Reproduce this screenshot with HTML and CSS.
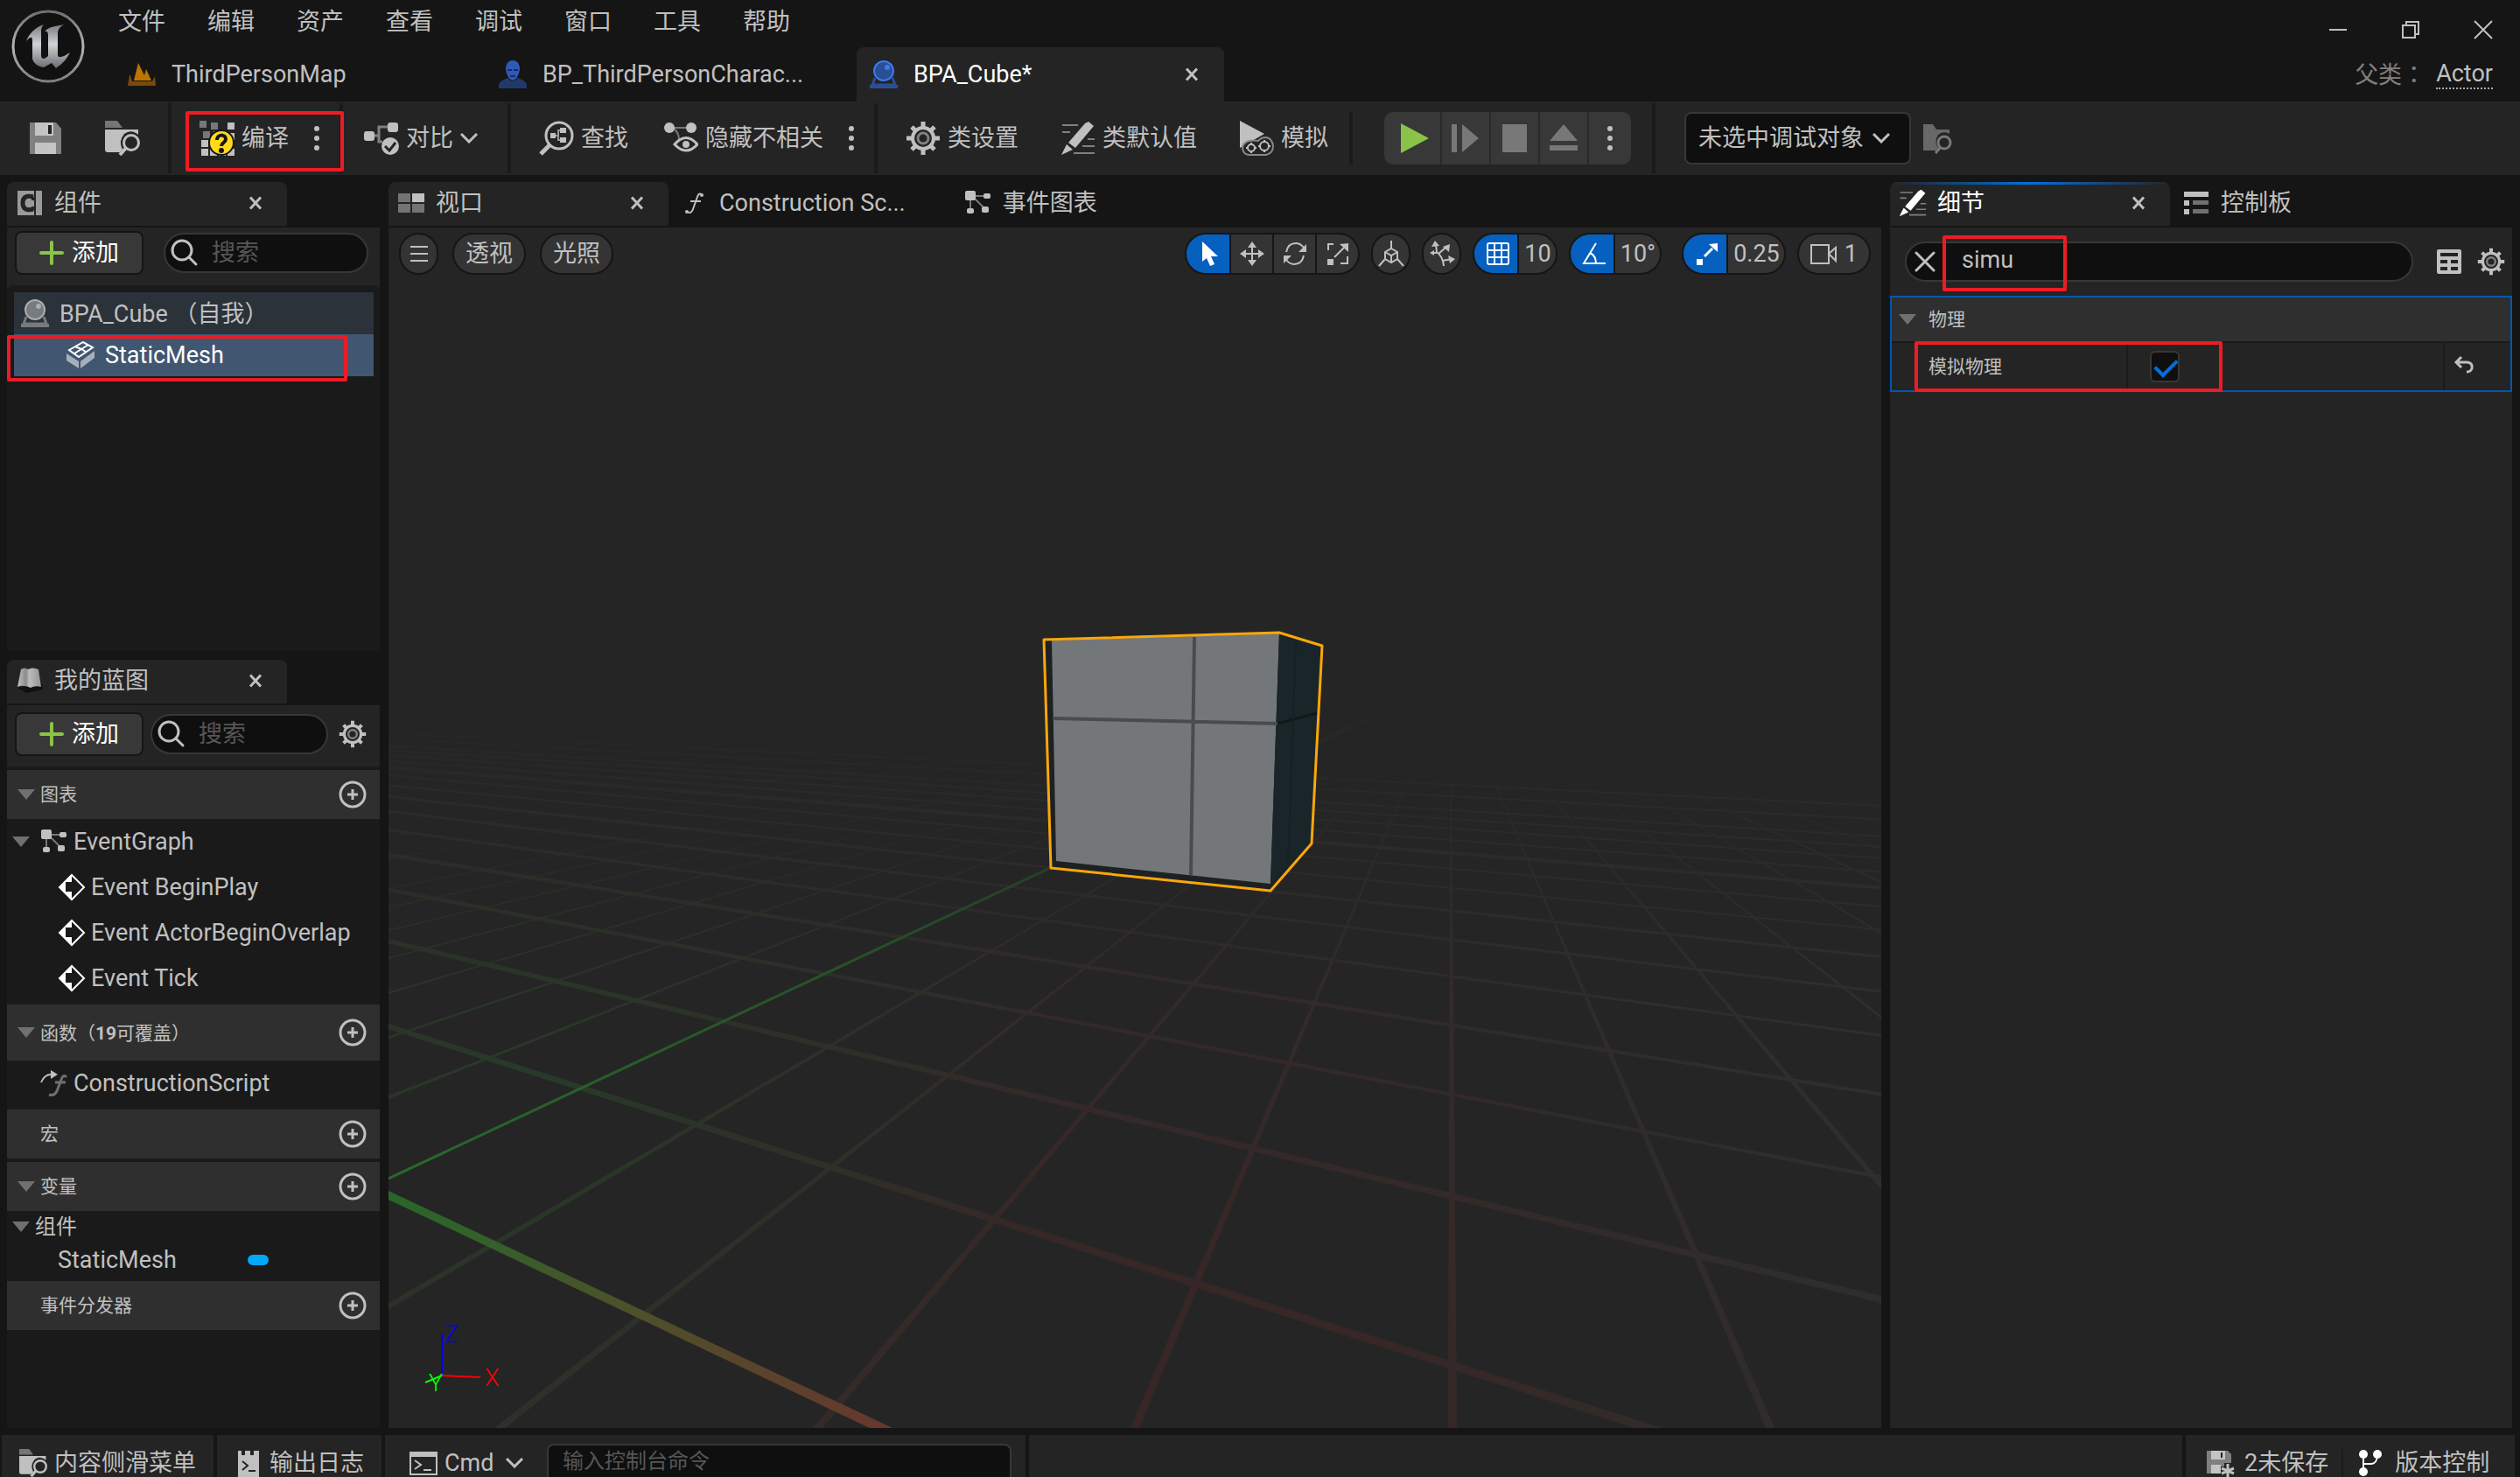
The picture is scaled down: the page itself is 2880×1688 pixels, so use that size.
FILE: index.html
```html
<!DOCTYPE html>
<html lang="zh-CN">
<head>
<meta charset="utf-8">
<meta name="viewport" content="width=device-width, initial-scale=1">
<title>BPA_Cube - 蓝图编辑器</title>
<link rel="stylesheet" href="styles.css">
</head>
<body>
<svg class="sprite" aria-hidden="true">
  <defs>
    <linearGradient id="metal" x1="0" y1="0" x2="0" y2="1"><stop offset="0" stop-color="#777b80"/><stop offset=".45" stop-color="#d0d2d4"/><stop offset="1" stop-color="#686d72"/></linearGradient>
    <linearGradient id="metal-ring" x1="0" y1="0" x2="0" y2="1"><stop offset="0" stop-color="#6b7074"/><stop offset=".5" stop-color="#b2b5b8"/><stop offset="1" stop-color="#7c8084"/></linearGradient>
    <linearGradient id="book" x1="0" y1="0" x2="1" y2="0"><stop offset="0" stop-color="#c4c4c4"/><stop offset=".35" stop-color="#8a8a8a"/><stop offset=".5" stop-color="#bcbcbc"/><stop offset="1" stop-color="#929292"/></linearGradient>
  </defs>
  <symbol id="i-logo" viewBox="0 0 84 84"><circle cx="42" cy="42" r="40" fill="#111" stroke="url(#metal-ring)" stroke-width="3"/><path fill="url(#metal)" d="M17 36C21 26 28 20 37 17C34 20 34 23 34 27V52C34 57 38 57 42 53V29C42 25 40 24 38 25C43 19 52 19 60 17C55 20 53 23 53 27V51C53 56 58 55 67 49C63 57 58 62 51 67L46 61L37 66C30 65 25 61 24 56V35C24 30 21 31 17 36Z"/></symbol>
  <symbol id="i-map" viewBox="0 0 32 32"><path fill="#bd7500" d="M12 3L19 17L21 10L27 23H7Z"/><path fill="#7a4a0b" d="M2 17H3L5 24H28L31 18L32 29H0Z"/></symbol>
  <symbol id="i-person" viewBox="0 0 32 32"><path fill="#2e59b8" d="M16 0C21 0 24 4 24 10L23 15L20 21L16 23L12 21L9 15L8 10C8 4 11 0 16 0Z"/><path fill="#22386b" d="M10 20Q16 27 22 20Q31 23 32 28V32H0V28Q1 23 10 20Z"/><path stroke="#1a2c5c" stroke-width="2" fill="none" d="M10 11h5M17 11h5M13 18h6"/></symbol>
  <symbol id="i-orb" viewBox="0 0 32 32"><circle cx="16" cy="12" r="11" fill="var(--orb)" stroke="var(--orb-hi)" stroke-width="2"/><circle cx="20" cy="8" r="3" fill="var(--orb-hi)"/><path fill="none" stroke="var(--orb)" stroke-width="3" d="M6 20L3 28H29L26 20"/><path fill="var(--orb)" d="M0 28H32V32H0Z"/></symbol>
  <symbol id="i-x" viewBox="0 0 16 16"><path fill="none" stroke="currentColor" stroke-width="3" d="M2 1.500L14 14.500M14 1.500L2 14.500"/></symbol>
  <symbol id="i-clear" viewBox="0 0 24 24"><path fill="none" stroke="currentColor" stroke-width="3" stroke-linecap="round" d="M2 2L22 22M22 2L2 22"/></symbol>
  <symbol id="i-min" viewBox="0 0 22 22"><path fill="currentColor" d="M1 10H21V12H1Z"/></symbol>
  <symbol id="i-restore" viewBox="0 0 22 22"><path fill="none" stroke="currentColor" stroke-width="2" d="M6 5V2H20V16H17M2 6H16V20H2Z"/></symbol>
  <symbol id="i-close" viewBox="0 0 22 22"><path fill="none" stroke="currentColor" stroke-width="2" d="M1 1L21 21M21 1L1 21"/></symbol>
  <symbol id="i-save" viewBox="0 0 40 40"><path fill="#808080" d="M2 2H32L38 9V38H2Z"/><path fill="#c4c4c4" d="M8 2H29V17H8ZM8 25H32V38H8Z"/><path fill="#222" d="M23 5H27V15H23Z"/></symbol>
  <symbol id="i-browse" viewBox="0 0 40 40"><path fill="#767676" d="M0 0H14L20 8H0Z"/><path fill="#c0c0c0" d="M0 10H38V16Q30 9 22 15Q15 23 20 33L17 36H3Q0 36 0 33Z"/><circle cx="30" cy="25" r="8.500" fill="none" stroke="#c0c0c0" stroke-width="3"/><path stroke="#c0c0c0" stroke-width="4" d="M24 31L17 39"/></symbol>
  <symbol id="i-compile" viewBox="0 0 40 40"><path fill="#777" d="M0 0h8v8H0zM13 2h8v8h-8zM4 12h8v8H4z"/><path fill="#c0c0c0" d="M32 2h8v8h-8zM2 22h8v8H2zM2 32h8v8H2zM16 12h8v8h-8zM32 32h8v8h-8zM12 32h8v8h-8zM22 34h8v6h-8zM34 14h6v8h-6z"/><circle cx="25" cy="25" r="14" fill="#ffd91a" stroke="#151515" stroke-width="2"/><path fill="none" stroke="#151515" stroke-width="4" d="M20 22C20 15 30 15 30 21C30 25 25 25 25 29"/><circle cx="25" cy="34" r="3" fill="#151515"/></symbol>
  <symbol id="i-diff" viewBox="0 0 40 40"><path fill="none" stroke="#808080" stroke-width="3" d="M10 17H17V7H28M17 17V24H21"/><rect y="12" width="12" height="11" rx="3" fill="#c0c0c0"/><rect x="27" y="2" width="12" height="11" rx="3" fill="#c0c0c0"/><circle cx="30" cy="29" r="10" fill="#c0c0c0"/><path fill="none" stroke="#242424" stroke-width="3" d="M24 29L29 34L36 25"/></symbol>
  <symbol id="i-find" viewBox="0 0 40 40"><circle cx="23" cy="17" r="15" fill="none" stroke="#c0c0c0" stroke-width="3"/><path stroke="#c0c0c0" stroke-width="5" d="M12 28L2 38"/><path fill="none" stroke="#999" stroke-width="2" d="M16 17H22V11H26M22 17V22H26"/><path fill="#c0c0c0" d="M13 14h6v6h-6zM24 8h7v6h-7zM24 19h7v6h-7z"/></symbol>
  <symbol id="i-hide" viewBox="0 0 40 40"><path fill="none" stroke="#777" stroke-width="2" d="M8 8H30M10 8Q18 12 18 22"/><circle cx="7" cy="8" r="6" fill="#c0c0c0"/><circle cx="32" cy="8" r="6" fill="#c0c0c0"/><path fill="none" stroke="#c0c0c0" stroke-width="3" d="M13 27Q26 12 39 27Q26 41 13 27Z"/><circle cx="26" cy="27" r="4" fill="#c0c0c0"/></symbol>
  <symbol id="i-gear" viewBox="0 0 40 40"><g stroke="#c0c0c0" stroke-width="5"><path d="M20 1V9M20 31V39M1 20H9M31 20H39M7 7L12 12M28 28L33 33M33 7L28 12M12 28L7 33"/></g><circle cx="20" cy="20" r="12" fill="none" stroke="#c0c0c0" stroke-width="4"/><circle cx="20" cy="20" r="6" fill="none" stroke="#808080" stroke-width="3"/></symbol>
  <symbol id="i-pencil" viewBox="0 0 40 40"><path fill="none" stroke="#808080" stroke-width="2" d="M2 5H20M2 13H11M31 21H39M25 29H39M15 37H39"/><path fill="currentColor" d="M28 3L32 1L38 6L17 31L9 25ZM7 27L14 33L1 39Z"/></symbol>
  <symbol id="i-simulate" viewBox="0 0 40 40"><path fill="#c0c0c0" d="M1 0L29 15L1 31Z"/><path fill="#242424" stroke="#888" stroke-width="2" d="M4 30Q4 38 11 39H31Q39 37 39 29Q38 20 31 19Q25 19 22 23Q17 22 12 23Q5 25 4 30Z"/><g fill="none" stroke="#c0c0c0" stroke-width="2"><circle cx="14" cy="31" r="4"/><circle cx="29" cy="29" r="5"/></g><path stroke="#c0c0c0" stroke-width="2" d="M14 25V28M14 34V37M8 31H11M17 31H20M29 22V25M29 33V36M22 29H25M33 29H36"/></symbol>
  <symbol id="i-dots" viewBox="0 0 8 32"><g fill="currentColor"><circle cx="4" cy="5" r="3"/><circle cx="4" cy="16" r="3"/><circle cx="4" cy="27" r="3"/></g></symbol>
  <symbol id="i-chev" viewBox="0 0 20 12"><path fill="none" stroke="currentColor" stroke-width="3" d="M1 1L10 10L19 1"/></symbol>
  <symbol id="i-play" viewBox="0 0 36 36"><path fill="#8bc34a" d="M2 1L34 18L2 35Z"/></symbol>
  <symbol id="i-step" viewBox="0 0 36 36"><path fill="#787878" d="M2 2H8V34H2ZM14 2L33 18L14 34Z"/></symbol>
  <symbol id="i-stop" viewBox="0 0 36 36"><path fill="#787878" d="M4 2H32V34H4Z"/></symbol>
  <symbol id="i-eject" viewBox="0 0 36 36"><path fill="#787878" d="M18 2L34 21H2ZM2 26H34V32H2Z"/></symbol>
  <symbol id="i-browse-dim" viewBox="0 0 36 36"><path fill="#686868" d="M2 2H13L17 8H32V13Q25 9 19 14Q14 22 19 29L17 32H2Z"/><circle cx="26" cy="23" r="7" fill="none" stroke="#787878" stroke-width="3"/><path stroke="#787878" stroke-width="3" d="M21 29L16 35"/></symbol>
  <symbol id="i-comp" viewBox="0 0 32 32"><path fill="#9a9a9a" d="M2 2H30V30H2Z"/><path fill="none" stroke="#242424" stroke-width="5" d="M20 9Q8 6 8 16Q8 26 20 23"/><path fill="#242424" d="M21 2h2v28h-2zM18 9h5v4h-5zM18 20h5v4h-5z"/></symbol>
  <symbol id="i-bp" viewBox="0 0 32 32"><path fill="#101010" d="M2 24L30 20L31 26L12 30Z"/><path fill="url(#book)" d="M6 3Q10 0 14 3Q19 0 26 3L29 23Q22 21 17 24Q8 20 2 23Z"/></symbol>
  <symbol id="i-view" viewBox="0 0 32 32"><path fill="#747474" d="M1 5h14v10H1zM1 17h14v10H1zM17 17h14v10H17z"/><path fill="#c0c0c0" d="M17 5h14v10H17z"/></symbol>
  <symbol id="i-func" viewBox="0 0 32 32"><path fill="none" stroke="currentColor" stroke-width="2" d="M25 7Q21 3 19 9L14 23Q12 29 7 26M11 14H23"/><circle cx="24" cy="7" r="2" fill="currentColor"/><circle cx="7" cy="26" r="2" fill="currentColor"/></symbol>
  <symbol id="i-graph" viewBox="0 0 32 32"><path fill="none" stroke="#777" stroke-width="2" d="M10 8H26M7 10V26M10 9L24 23"/><g fill="#c0c0c0"><rect x="1" y="2" width="12" height="11" rx="2"/><rect x="22" y="5" width="8" height="6" rx="2"/><rect x="3" y="22" width="8" height="6" rx="2"/><rect x="20" y="20" width="8" height="7" rx="2"/></g></symbol>
  <symbol id="i-plus" viewBox="0 0 28 28"><path stroke="#8bc34a" stroke-width="4" stroke-linecap="round" d="M14 2V26M2 14H26"/></symbol>
  <symbol id="i-search" viewBox="0 0 32 32"><circle cx="13" cy="13" r="11" fill="none" stroke="#c0c0c0" stroke-width="3"/><path stroke="#c0c0c0" stroke-width="3" stroke-linecap="round" d="M21 21L29 29"/></symbol>
  <symbol id="i-mesh" viewBox="0 0 32 32"><path fill="#a6b0bb" d="M0 14L14 23V31L0 22ZM32 11V19L16 31V23Z"/><path fill="none" stroke="#fff" stroke-width="2" d="M3 10L19 1L30 7L14 18ZM9 14L17 9L25 4M10 6L17 9L22 12"/></symbol>
  <symbol id="i-tri" viewBox="0 0 20 12"><path fill="#707070" d="M0 0H20L10 12Z"/></symbol>
  <symbol id="i-add" viewBox="0 0 32 32"><circle cx="16" cy="16" r="14" fill="none" stroke="#c0c0c0" stroke-width="3"/><path stroke="#c0c0c0" stroke-width="3" d="M16 10V22M10 16H22"/></symbol>
  <symbol id="i-event" viewBox="0 0 32 32"><path fill="none" stroke="#fff" stroke-width="2" d="M16 2L30 16L16 30L2 16Z"/><path fill="#fff" d="M16 2V10H9V21H16V30L2 16Z"/></symbol>
  <symbol id="i-override" viewBox="0 0 32 32"><path fill="none" stroke="#c0c0c0" stroke-width="2" d="M1 15Q5 5 14 6"/><path fill="#c0c0c0" d="M12 1L20 6L12 11Z"/><path fill="none" stroke="#707070" stroke-width="3" d="M30 9Q26 5 24 12L19 25Q16 31 10 29M17 15H29"/></symbol>
  <symbol id="i-menu" viewBox="0 0 24 24"><path stroke="currentColor" stroke-width="2" d="M2 4H22M2 12H22M2 20H22"/></symbol>
  <symbol id="i-cursor" viewBox="0 0 28 28"><path fill="#fff" d="M5 0L23 17H15L19 26L14 28L10 19L5 23Z"/></symbol>
  <symbol id="i-move" viewBox="0 0 28 28"><path stroke="currentColor" stroke-width="2" d="M14 4V24M4 14H24"/><path fill="currentColor" d="M14 0L19 7H9ZM14 28L19 21H9ZM0 14L7 9V19ZM28 14L21 9V19Z"/></symbol>
  <symbol id="i-rotate" viewBox="0 0 28 28"><path fill="none" stroke="currentColor" stroke-width="2" d="M4 12Q6 2 15 2Q20 2 24 7M24 16Q22 26 13 26Q8 26 4 21"/><path fill="currentColor" d="M27 3V12H18ZM1 25V16H10Z"/></symbol>
  <symbol id="i-scale" viewBox="0 0 28 28"><path fill="none" stroke="currentColor" stroke-width="2" d="M3 10V3H9M17 25H25V17M10 18L21 7"/><path fill="currentColor" d="M26 2V12L16 3ZM2 20H9V27H2Z"/></symbol>
  <symbol id="i-world" viewBox="0 0 32 32"><path fill="none" stroke="currentColor" stroke-width="2" d="M16 1V10M16 10L23 14V22L16 26L9 22V14ZM9 14L16 18L23 14M16 18V26M9 22L2 30M23 22L30 30"/></symbol>
  <symbol id="i-snap" viewBox="0 0 32 32"><path fill="none" stroke="currentColor" stroke-width="2" d="M9 5L10 14Q17 19 18 30M10 15L4 15M12 16L20 9M16 24L28 22"/><path fill="currentColor" d="M8 1L13 7L4 8ZM25 5L24 14L17 8ZM31 22L25 27L23 18ZM2 15L7 12V18Z"/></symbol>
  <symbol id="i-grid" viewBox="0 0 28 28"><rect x="2" y="2" width="24" height="24" rx="2" fill="none" stroke="#fff" stroke-width="2"/><path stroke="#fff" stroke-width="2" d="M10 2V26M18 2V26M2 10H26M2 18H26"/></symbol>
  <symbol id="i-angle" viewBox="0 0 28 28"><path fill="none" stroke="#fff" stroke-width="2" d="M17 2L3 25H28M10 13Q17 16 17 25"/></symbol>
  <symbol id="i-scalesnap" viewBox="0 0 28 28"><path stroke="#fff" stroke-width="3" d="M11 17L20 8"/><path fill="#fff" d="M26 2V12L16 3ZM2 20H9V27H2Z"/></symbol>
  <symbol id="i-cam" viewBox="0 0 32 28"><path fill="none" stroke="currentColor" stroke-width="2" d="M2 4H22V25H2ZM22 14L30 7V22Z"/></symbol>
  <symbol id="i-palette" viewBox="0 0 32 32"><path fill="#c0c0c0" d="M2 3H30V9H2ZM2 13H8V19H2ZM2 23H8V29H2Z"/><path fill="#707070" d="M12 13H30V18H12ZM12 23H30V28H12Z"/></symbol>
  <symbol id="i-table" viewBox="0 0 32 32"><rect x="2" y="2" width="28" height="28" rx="2" fill="#c0c0c0"/><path fill="#242424" d="M6 6h20v4H6zM6 14h8v4H6zM18 14h8v4H18zM6 22h8v4H6zM18 22h8v4H18z"/></symbol>
  <symbol id="i-undo" viewBox="0 0 24 24"><path fill="none" stroke="currentColor" stroke-width="3" d="M9 3L3 9L9 15M3 9H16Q22 10 21 16Q20 20 15 20"/></symbol>
  <symbol id="i-log" viewBox="0 0 32 32"><path fill="#c0c0c0" d="M4 2H8V7H12V2H18V7H22V2H28V32H4Z"/><path fill="none" stroke="#242424" stroke-width="2" d="M9 14L15 19L9 24M16 25H24"/></symbol>
  <symbol id="i-cmd" viewBox="0 0 32 32"><path fill="none" stroke="#c0c0c0" stroke-width="2" d="M1 4H31V29H1ZM6 13L13 18L6 23M16 24H25"/><path fill="#c0c0c0" d="M0 3H32V9H0Z"/></symbol>
  <symbol id="i-unsaved" viewBox="0 0 32 32"><path fill="#808080" d="M0 2H24L28 6V20H16V28H0Z"/><path fill="#c4c4c4" d="M5 2H21V12H5ZM5 18H16V28H5Z"/><path fill="#222" d="M16 4H18V10H16Z"/><path stroke="#242424" stroke-width="8" d="M24 16V32"/><path stroke="#c0c0c0" stroke-width="3" d="M24 17V32M17 22L31 28M31 22L17 28"/></symbol>
  <symbol id="i-branch" viewBox="0 0 32 32"><path fill="none" stroke="#fff" stroke-width="2" d="M7 6V27M7 17H16Q22 17 23 8"/><g fill="#fff"><circle cx="7" cy="6" r="5"/><circle cx="23" cy="6" r="5"/><circle cx="7" cy="26" r="5"/></g></symbol>
</svg>

<div class="app">
  <header class="titlebar">
    <div class="logo"><svg class="ic-logo"><use href="#i-logo"/></svg></div>
    <div class="title-main">
      <nav class="menu">
        <button>文件</button><button>编辑</button><button>资产</button><button>查看</button><button>调试</button><button>窗口</button><button>工具</button><button>帮助</button>
      </nav>
      <div class="doc-tabs" role="tablist">
        <button class="doc-tab" role="tab"><svg class="ic32"><use href="#i-map"/></svg><span>ThirdPersonMap</span></button>
        <button class="doc-tab" role="tab"><svg class="ic32"><use href="#i-person"/></svg><span>BP_ThirdPersonCharac...</span></button>
        <button class="doc-tab active" role="tab" aria-selected="true"><svg class="ic32 orb-blue"><use href="#i-orb"/></svg><span>BPA_Cube*</span><svg class="ic16"><use href="#i-x"/></svg></button>
      </div>
    </div>
    <div class="title-side">
      <div class="win-controls">
        <button aria-label="最小化"><svg class="ic22"><use href="#i-min"/></svg></button>
        <button aria-label="还原"><svg class="ic22"><use href="#i-restore"/></svg></button>
        <button aria-label="关闭"><svg class="ic22"><use href="#i-close"/></svg></button>
      </div>
      <div class="parent"><span class="parent-label">父类<span class="punct" lang="zh-TW">：</span></span><a href="#actor">Actor</a></div>
    </div>
  </header>

  <div class="toolbar">
    <div class="tb-group files">
      <button class="tb" aria-label="保存"><svg class="ic40"><use href="#i-save"/></svg></button>
      <button class="tb" aria-label="浏览"><svg class="ic40"><use href="#i-browse"/></svg></button>
    </div>
    <div class="tb-group compile">
      <button class="tb"><svg class="ic40"><use href="#i-compile"/></svg>编译</button>
      <button class="tb more" aria-label="编译选项"><svg class="ic-dots"><use href="#i-dots"/></svg></button>
      <span class="mark mark-compile"></span>
    </div>
    <div class="tb-group diff">
      <button class="tb"><svg class="ic40"><use href="#i-diff"/></svg>对比<svg class="ic-chev"><use href="#i-chev"/></svg></button>
    </div>
    <div class="tb-group find">
      <button class="tb"><svg class="ic40"><use href="#i-find"/></svg>查找</button>
      <button class="tb"><svg class="ic40"><use href="#i-hide"/></svg>隐藏不相关</button>
      <button class="tb more" aria-label="隐藏选项"><svg class="ic-dots"><use href="#i-dots"/></svg></button>
    </div>
    <div class="tb-group class-tools">
      <button class="tb"><svg class="ic40"><use href="#i-gear"/></svg>类设置</button>
      <button class="tb"><svg class="ic40"><use href="#i-pencil"/></svg>类默认值</button>
      <button class="tb"><svg class="ic40"><use href="#i-simulate"/></svg>模拟</button>
    </div>
    <div class="tb-group run">
      <div class="play">
        <button aria-label="运行"><svg class="ic36"><use href="#i-play"/></svg></button>
        <button aria-label="单步"><svg class="ic36"><use href="#i-step"/></svg></button>
        <button aria-label="停止"><svg class="ic36"><use href="#i-stop"/></svg></button>
        <button aria-label="弹出"><svg class="ic36"><use href="#i-eject"/></svg></button>
        <button aria-label="运行选项"><svg class="ic-dots"><use href="#i-dots"/></svg></button>
      </div>
    </div>
    <div class="tb-group debug">
      <div class="select"><select aria-label="调试对象"><option>未选中调试对象</option></select><svg class="ic-chev"><use href="#i-chev"/></svg></div>
      <button class="tb" aria-label="定位调试对象"><svg class="ic36"><use href="#i-browse-dim"/></svg></button>
    </div>
  </div>

  <main class="work">
    <div class="left">
      <section class="dock components">
        <div class="tabs"><button class="tab active"><svg class="ic32"><use href="#i-comp"/></svg><span>组件</span><svg class="ic16"><use href="#i-x"/></svg></button></div>
        <div class="panel">
          <div class="tools">
            <button class="add"><svg class="ic28"><use href="#i-plus"/></svg>添加</button>
            <label class="search"><svg class="ic32"><use href="#i-search"/></svg><input type="text" placeholder="搜索" aria-label="搜索组件"></label>
          </div>
          <div class="tree">
            <div class="node root"><svg class="ic32 orb-gray"><use href="#i-orb"/></svg><span>BPA_Cube <span class="punct" lang="zh-TW">（</span>自我<span class="punct" lang="zh-TW">）</span></span></div>
            <div class="node child"><svg class="ic32"><use href="#i-mesh"/></svg>StaticMesh<span class="mark mark-node"></span></div>
          </div>
        </div>
      </section>

      <section class="dock blueprint">
        <div class="tabs"><button class="tab active"><svg class="ic32"><use href="#i-bp"/></svg><span>我的蓝图</span><svg class="ic16"><use href="#i-x"/></svg></button></div>
        <div class="panel">
          <div class="tools">
            <button class="add"><svg class="ic28"><use href="#i-plus"/></svg>添加</button>
            <label class="search"><svg class="ic32"><use href="#i-search"/></svg><input type="text" placeholder="搜索" aria-label="搜索蓝图"></label>
            <button class="plain" aria-label="设置"><svg class="ic32"><use href="#i-gear"/></svg></button>
          </div>
          <div class="outline">
            <section><h3 class="head"><svg class="ic-tri"><use href="#i-tri"/></svg>图表<button aria-label="添加图表"><svg class="ic32"><use href="#i-add"/></svg></button></h3>
              <ul>
                <li class="row"><svg class="ic-tri"><use href="#i-tri"/></svg><svg class="ic32"><use href="#i-graph"/></svg>EventGraph</li>
                <li class="row sub"><svg class="ic32"><use href="#i-event"/></svg>Event BeginPlay</li>
                <li class="row sub"><svg class="ic32"><use href="#i-event"/></svg>Event ActorBeginOverlap</li>
                <li class="row sub"><svg class="ic32"><use href="#i-event"/></svg>Event Tick</li>
              </ul></section>
            <section><h3 class="head tall"><svg class="ic-tri"><use href="#i-tri"/></svg><span>函数<span class="punct" lang="zh-TW">（</span><b>19</b>可覆盖<span class="punct" lang="zh-TW">）</span></span><button aria-label="添加函数"><svg class="ic32"><use href="#i-add"/></svg></button></h3>
              <ul><li class="row leaf"><svg class="ic32"><use href="#i-override"/></svg>ConstructionScript</li></ul></section>
            <section><h3 class="head bare">宏<button aria-label="添加宏"><svg class="ic32"><use href="#i-add"/></svg></button></h3></section>
            <section><h3 class="head"><svg class="ic-tri"><use href="#i-tri"/></svg>变量<button aria-label="添加变量"><svg class="ic32"><use href="#i-add"/></svg></button></h3>
              <ul><li class="row cat"><svg class="ic-tri"><use href="#i-tri"/></svg>组件</li>
                <li class="row var">StaticMesh<span class="pill"></span></li></ul></section>
            <section><h3 class="head bare">事件分发器<button aria-label="添加事件分发器"><svg class="ic32"><use href="#i-add"/></svg></button></h3></section>
          </div>
        </div>
      </section>
    </div>

    <section class="dock center">
      <div class="tabs">
        <button class="tab active"><svg class="ic32"><use href="#i-view"/></svg><span>视口</span><svg class="ic16"><use href="#i-x"/></svg></button>
        <button class="tab"><svg class="ic32"><use href="#i-func"/></svg><span>Construction Sc...</span></button>
        <button class="tab"><svg class="ic32"><use href="#i-graph"/></svg><span>事件图表</span></button>
      </div>
      <div class="viewport">
        <svg class="scene" viewBox="0 0 1706 1372" preserveAspectRatio="xMinYMax slice" aria-hidden="true">
          <defs>
            <linearGradient id="axis-x" gradientUnits="userSpaceOnUse" x1="0" y1="1106" x2="565" y2="1372"><stop offset="0" stop-color="#286629"/><stop offset=".2" stop-color="#35602a"/><stop offset=".5" stop-color="#4e502a"/><stop offset="1" stop-color="#66382c"/></linearGradient>
            <linearGradient id="fade" x1="0" y1="0" x2="0" y2="1"><stop offset=".39" stop-color="#fff" stop-opacity="0"/><stop offset=".48" stop-color="#fff" stop-opacity=".6"/><stop offset=".64" stop-color="#fff"/></linearGradient>
            <linearGradient id="axis-y" gradientUnits="userSpaceOnUse" x1="1214" y1="517" x2="0" y2="1087"><stop offset="0" stop-color="#242424"/><stop offset=".3" stop-color="#25352a"/><stop offset=".5" stop-color="#264c2a"/><stop offset="1" stop-color="#286a2a"/></linearGradient>
            <radialGradient id="warm" gradientUnits="userSpaceOnUse" cx="850" cy="1450" r="900"><stop offset="0" stop-color="#382626"/><stop offset=".35" stop-color="#382626" stop-opacity=".9"/><stop offset="1" stop-color="#382626" stop-opacity="0"/></radialGradient>
            <radialGradient id="cool" gradientUnits="userSpaceOnUse" cx="150" cy="1000" r="620"><stop offset="0" stop-color="#263c27"/><stop offset=".4" stop-color="#2c3228" stop-opacity=".9"/><stop offset="1" stop-color="#2c3228" stop-opacity="0"/></radialGradient>
            <mask id="horizon"><rect width="1706" height="1372" fill="url(#fade)"/></mask>
            <g id="grid">
              <path stroke="none" d="M1214 517L1211 1372H1221ZM1214 517L848 1372H858ZM1214 517L485 1372H496ZM1214 517L121 1372H133ZM1214 517L-243 1372H-229ZM1214 517L-970 1372H-954ZM1214 517L-1333 1372H-1317ZM1214 517L-1696 1372H-1680ZM1214 517L-2059 1372H-2043ZM1214 517L-2422 1372H-2406ZM1214 517L-2785 1372H-2769ZM1214 517L-3148 1372H-3132ZM1214 517L-3874 1372H-3858ZM1214 517L-4600 1372H-4584ZM1214 517L1574 1372H1584ZM1214 517L1936 1372H1948ZM1214 517L2299 1372H2311ZM1214 517L2661 1372H2675ZM1214 517L3021 1372H3041ZM1214 517L3386 1372H3402ZM1214 517L3749 1372H3765ZM1214 517L4112 1372H4128ZM1214 517L4475 1372H4491ZM1214 517L4838 1372H4854Z"/>
              <path stroke="none" d="M0 910L1456 1372H1424L0 916Z"/>
              <path stroke="none" d="M0 813L1706 1221V1229L0 818Z"/>
              <path fill="none" stroke-width="4" d="M-1245 517L3677 1465"/>
              <path fill="none" stroke-width="4" d="M-1245 517L3677 1307"/>
              <path fill="none" stroke-width="4" d="M-1245 517L3677 913"/>
              <path fill="none" stroke-width="3" d="M-1245 517L3677 1195M-1245 517L3677 1111M-1245 517L3677 1045"/>
              <path fill="none" stroke-width="2" d="M-1245 517L3677 993M-1245 517L3677 949M-1245 517L3677 883M-1245 517L3677 857M-1245 517L3677 835M-1245 517L3677 815M-1245 517L3677 783M-1245 517L3677 757"/>
            </g>
          </defs>
          <g mask="url(#horizon)">
            <use href="#grid" fill="#2e2e2e" stroke="#2e2e2e"/>
            <use href="#grid" fill="url(#warm)" stroke="url(#warm)"/>
            <use href="#grid" fill="url(#cool)" stroke="url(#cool)"/>
          </g>
          <path d="M1214 517L0 1087" stroke="url(#axis-y)" stroke-width="3"/>
          <path d="M0 1101L576 1372H550L0 1111Z" fill="url(#axis-x)"/>
          <path fill="#1e2122" d="M749 471L1018 463L1067 478L1055 704L1008 758L757 732Z"/>
          <path fill="#73777a" d="M758 472L1018 464L1008 750L763 724Z"/>
          <path fill="#1a2529" d="M1018 464L1066 478L1055 703L1008 750Z"/>
          <path fill="none" stroke="#484c4e" stroke-width="4" d="M921 468L917 740M759 561L1016 567"/>
          <path fill="none" stroke="#11181a" stroke-width="3" d="M1016 567L1061 555"/>
          <path fill="none" stroke="#152023" stroke-width="2" d="M1037 473L1028 727"/>
          <path fill="none" stroke="#faa70c" stroke-width="3" stroke-linejoin="round" d="M749 471L1018 463L1067 478L1055 704L1008 758L757 732Z"/>
        </svg>
        <svg class="gizmo" viewBox="0 0 120 110" aria-hidden="true">
          <path stroke="#0000ff" stroke-width="2" d="M31 22V70"/><path stroke="#ff0000" stroke-width="2" d="M31 70L75 72"/><path stroke="#00ff00" stroke-width="2" d="M31 70L12 78"/>
          <text x="34" y="32" fill="#0000ff">Z</text><text x="80" y="82" fill="#ff0000">X</text><text x="16" y="88" fill="#00ff00">Y</text>
        </svg>
        <div class="vp-bar">
          <div class="vp-left">
            <button class="chip round" aria-label="菜单"><svg class="ic24"><use href="#i-menu"/></svg></button>
            <button class="chip">透视</button>
            <button class="chip">光照</button>
          </div>
          <div class="vp-right">
            <div class="seg"><button class="on" aria-label="选择"><svg class="ic28"><use href="#i-cursor"/></svg></button><button aria-label="移动"><svg class="ic28"><use href="#i-move"/></svg></button><button aria-label="旋转"><svg class="ic28"><use href="#i-rotate"/></svg></button><button aria-label="缩放"><svg class="ic28"><use href="#i-scale"/></svg></button></div>
            <button class="chip round" aria-label="坐标系"><svg class="ic32"><use href="#i-world"/></svg></button>
            <button class="chip round" aria-label="表面对齐"><svg class="ic32"><use href="#i-snap"/></svg></button>
            <div class="seg"><button class="on" aria-label="网格对齐"><svg class="ic28"><use href="#i-grid"/></svg></button><button class="val">10</button></div>
            <div class="seg"><button class="on" aria-label="角度对齐"><svg class="ic28"><use href="#i-angle"/></svg></button><button class="val">10°</button></div>
            <div class="seg apart"><button class="on" aria-label="缩放对齐"><svg class="ic28"><use href="#i-scalesnap"/></svg></button><button class="val">0.25</button></div>
            <button class="chip cam"><svg class="ic32"><use href="#i-cam"/></svg>1</button>
          </div>
        </div>
      </div>
    </section>

    <section class="dock details">
      <div class="tabs">
        <button class="tab active focus"><svg class="ic32"><use href="#i-pencil"/></svg><span>细节</span><svg class="ic16"><use href="#i-x"/></svg></button>
        <button class="tab"><svg class="ic32"><use href="#i-palette"/></svg><span>控制板</span></button>
      </div>
      <div class="panel">
        <div class="filter">
          <div class="search wide"><button class="plain" aria-label="清除"><svg class="ic24"><use href="#i-clear"/></svg></button><input type="text" value="simu" aria-label="搜索细节"><span class="mark mark-search"></span></div>
          <button class="plain" aria-label="属性矩阵"><svg class="ic32"><use href="#i-table"/></svg></button>
          <button class="plain" aria-label="视图设置"><svg class="ic32"><use href="#i-gear"/></svg></button>
        </div>
        <div class="category">
          <h3><svg class="ic-tri"><use href="#i-tri"/></svg>物理</h3>
          <div class="prop">
            <label for="simulate">模拟物理</label>
            <div class="value"><input id="simulate" type="checkbox" checked></div>
            <button class="plain reset" aria-label="重置为默认值"><svg class="ic24"><use href="#i-undo"/></svg></button>
            <span class="mark mark-prop"></span>
          </div>
        </div>
      </div>
    </section>
  </main>

  <footer class="status">
    <button class="st drawer"><svg class="ic32"><use href="#i-browse"/></svg>内容侧滑菜单</button>
    <button class="st log"><svg class="ic32"><use href="#i-log"/></svg>输出日志</button>
    <div class="st console"><button class="cmd"><svg class="ic32"><use href="#i-cmd"/></svg>Cmd<svg class="ic-chev"><use href="#i-chev"/></svg></button><input type="text" placeholder="输入控制台命令" aria-label="控制台命令"></div>
    <div class="st fill"></div>
    <div class="st source">
      <button><svg class="ic32"><use href="#i-unsaved"/></svg>2未保存</button>
      <button class="vcs"><svg class="ic32"><use href="#i-branch"/></svg>版本控制</button>
    </div>
  </footer>
</div>
</body>
</html>
```
FILE: styles.css
```css
:root {
  --bg: #151515;
  --panel: #242424;
  --deep: #1a1a1a;
  --head: #2f2f2f;
  --field: #0f0f0f;
  --line: #373737;
  --text: #c0c0c0;
  --blue: #0660bf;
  --red: #ed1c24;
}

* { box-sizing: border-box; }

body {
  margin: 0;
  background: var(--bg);
  color: var(--text);
  font: 27px/32px Roboto, "Noto Sans CJK SC", sans-serif;
}

button, input, select {
  margin: 0;
  padding: 0;
  border: 0;
  background: none;
  color: inherit;
  font: inherit;
}

button {
  display: flex;
  align-items: center;
  white-space: nowrap;
}

input { min-width: 0; outline: 0; }
input::placeholder { color: #565656; opacity: 1; }
h3, ul { margin: 0; padding: 0; list-style: none; font-weight: 400; }
svg { display: block; flex: none; }

/* Full-width punctuation sits in the middle of its cell */
.punct { font-family: "Noto Sans CJK TC", sans-serif; }

.sprite { position: absolute; width: 0; height: 0; }
.ic-logo { width: 84px; height: 84px; }
.ic16 { width: 16px; height: 16px; }
.ic22 { width: 22px; height: 22px; }
.ic24 { width: 24px; height: 24px; }
.ic28 { width: 28px; height: 28px; }
.ic32 { width: 32px; height: 32px; }
.ic36 { width: 36px; height: 36px; }
.ic40 { width: 40px; height: 40px; }
.ic-dots { width: 8px; height: 32px; }
.ic-chev { width: 20px; height: 12px; }
.ic-tri { width: 20px; height: 12px; }
.orb-blue { --orb: #2b4f94; --orb-hi: #3c7bf0; }
.orb-gray { --orb: #777a7e; --orb-hi: #a9acb0; }

.app {
  display: flex;
  flex-direction: column;
  height: 100vh;
  overflow: hidden;
}

/* Red callout frames laid over the controls they point at */
.mark {
  position: absolute;
  border: 4px solid var(--red);
  border-radius: 2px;
  pointer-events: none;
}

/* Title bar */
.titlebar { display: flex; height: 116px; flex: none; }
.logo { width: 131px; padding: 11px 0 0 13px; }
.title-main { display: flex; flex-direction: column; justify-content: space-between; }
.menu { display: flex; gap: 48px; height: 50px; padding-left: 4px; }
.doc-tabs { display: flex; gap: 4px; }
.doc-tab {
  width: 420px;
  height: 62px;
  padding: 0 29px 0 15px;
  gap: 18px;
  border-radius: 8px 8px 0 0;
}
.doc-tab.active { background: var(--panel); color: #fff; }
.doc-tab .ic16 { margin-left: auto; color: var(--text); }
.title-side {
  display: flex;
  flex-direction: column;
  align-items: flex-end;
  justify-content: space-between;
  margin-left: auto;
  padding: 23px 31px 14px 0;
}
.win-controls { display: flex; gap: 61px; }
.parent { display: flex; gap: 12px; }
.parent-label { color: #808080; }
.parent a { color: var(--text); text-decoration: none; border-bottom: 2px dotted #aaa; }

/* Main toolbar */
.toolbar { display: flex; height: 84px; flex: none; background: var(--panel); padding: 2px 0; }
.tb-group { display: flex; align-items: center; border-right: 4px solid var(--deep); }
.tb { gap: 8px; }
.files { gap: 48px; padding: 0 32px; }
.compile { position: relative; gap: 28px; padding: 0 22px 0 32px; }
.mark-compile { left: 16px; right: -5px; top: 9px; bottom: 2px; z-index: 1; }
.diff { padding: 0 34px 0 24px; }
.find { padding: 0 22px 0 32px; }
.find .tb + .tb { margin-left: 40px; }
.find .tb + .more { margin-left: 28px; }
.class-tools { gap: 48px; padding: 0 24px 0 32px; margin: 10px 0; }
.run { padding: 0 24px 0 36px; }
.play { display: flex; background: #383838; border-radius: 10px; }
.play button {
  justify-content: center;
  width: 56px;
  height: 60px;
  border-right: 2px solid #2a2a2a;
}
.play button:first-child { width: 66px; padding-left: 6px; }
.play button:last-child { width: 48px; border: 0; }
.debug { gap: 12px; padding-left: 33px; border: 0; }
.select { position: relative; width: 259px; }
.select select {
  appearance: none;
  width: 100%;
  height: 60px;
  padding: 0 48px 0 14px;
  border: 2px solid var(--line);
  border-radius: 8px;
  background: var(--field);
}
.select svg { position: absolute; right: 24px; top: 24px; pointer-events: none; }

/* Docked panels */
.work {
  display: grid;
  grid-template-columns: 426px minmax(0, 1fr) 711px;
  gap: 10px;
  flex: 1;
  min-height: 0;
  padding: 8px 9px 8px 8px;
}
.left { display: flex; flex-direction: column; gap: 10px; min-height: 0; }
.dock { display: flex; flex-direction: column; min-height: 0; min-width: 0; }
.components { flex: 536 1 0; }
.blueprint { flex: 878 1 0; }
.tabs { display: flex; height: 50px; margin-bottom: 2px; flex: none; }
.tab { gap: 12px; padding: 0 12px 2px 10px; border-radius: 8px 8px 0 0; }
.tab + .tab { margin-left: 4px; margin-right: 41px; }
.tab.active { width: 320px; padding-right: 28px; background: var(--panel); }
.tab.active .ic16 { margin-left: auto; color: var(--text); }
.tab.focus {
  color: #fff;
  background: linear-gradient(90deg, transparent, #0070e0, transparent) top / 100% 3px no-repeat var(--panel);
}
.panel { flex: 1; display: flex; flex-direction: column; min-height: 0; background: var(--panel); }
.tools { display: flex; height: 66px; padding: 4px 13px 0 9px; align-items: flex-start; flex: none; }
.add {
  width: 147px;
  height: 50px;
  padding-left: 26px;
  gap: 9px;
  border: 2px solid var(--bg);
  border-radius: 8px;
  background: #383838;
  color: #fff;
}
.search {
  display: flex;
  align-items: center;
  flex: 1;
  min-width: 0;
  height: 46px;
  margin: 2px 0 0 23px;
  padding: 0 16px 0 6px;
  gap: 15px;
  border: 2px solid var(--line);
  border-radius: 23px;
  background: var(--field);
}
.search input { width: 100%; height: 32px; }
.tree { flex: 1; padding: 8px 7px 0 8px; border-radius: 8px 8px 0 0; background: var(--deep); }
.node { position: relative; display: flex; align-items: center; height: 48px; gap: 12px; padding-left: 8px; }
.root { background: #2b323a; }
.child { background: #415670; color: #fff; padding-left: 60px; }
.mark-node { left: -8px; right: 30px; top: 1px; bottom: -6px; }

/* My Blueprint */
.blueprint .tools { height: 74px; padding: 8px 15px 0 9px; background: var(--panel); border-bottom: 4px solid var(--deep); }
.blueprint .search { margin-left: 8px; }
.plain { justify-content: center; width: 32px; height: 50px; flex: none; }
.blueprint .plain { margin-left: 12px; }
.outline { flex: 1; display: flex; flex-direction: column; gap: 4px; background: var(--deep); overflow: hidden; }
.head {
  display: flex;
  align-items: center;
  height: 56px;
  padding: 0 15px 0 12px;
  gap: 6px;
  background: var(--head);
  font-size: 21px;
}
.head.tall { height: 64px; }
.head.bare { padding-left: 38px; }
.head button { margin-left: auto; }
.row { display: flex; align-items: center; height: 52px; gap: 6px; padding-left: 6px; }
.row .ic-tri + .ic32 { margin-left: 6px; }
.row.sub { padding-left: 58px; }
.row.leaf { padding-left: 38px; }
.row.cat { height: 36px; font-size: 24px; }
.row.var { height: 40px; padding-left: 58px; justify-content: space-between; }
.pill { width: 24px; height: 12px; margin-right: 127px; border-radius: 6px; background: #00a8f7; }

/* Viewport */
.center .tab + .tab { gap: 12px; }
.viewport { position: relative; flex: 1; overflow: hidden; background: #252525; }
.scene { position: absolute; inset: 0; width: 100%; height: 100%; }
.gizmo { position: absolute; left: 30px; bottom: 20px; width: 120px; height: 110px; overflow: visible; font-size: 27px; font-weight: 300; }
.vp-bar { position: relative; display: flex; justify-content: space-between; padding: 6px 12px; }
.vp-left { display: flex; gap: 16px; }
.vp-right { display: flex; gap: 13px; }
.chip {
  height: 48px;
  padding: 0 13px;
  border: 2px solid var(--bg);
  border-radius: 24px;
  background: #343434;
}
.chip.round { width: 45px; padding: 0; justify-content: center; }
.chip.cam { gap: 8px; padding: 0 13px 0 12px; }
.seg {
  display: flex;
  height: 48px;
  border: 2px solid var(--bg);
  border-radius: 24px;
  background: #343434;
  overflow: hidden;
}
.seg button { justify-content: center; width: 49px; }
.seg button + button { border-left: 2px solid var(--bg); }
.seg .on { background: var(--blue); padding-left: 4px; }
.seg .val { width: auto; padding: 0 5px 0 6px; }
.seg.apart { margin-left: 10px; }

/* Details */
.filter { display: flex; align-items: center; height: 78px; padding: 0 4px 0 17px; gap: 8px; flex: none; }
.search.wide { position: relative; margin: 0 13px 0 0; padding-left: 5px; gap: 26px; }
.search.wide input { margin-bottom: 4px; }
.details .filter > .plain { width: 40px; }
.mark-search { left: 41px; top: -9px; width: 142px; height: 64px; }
.category { border: 2px solid #0058ae; }
.category h3 {
  display: flex;
  align-items: center;
  height: 52px;
  padding-left: 8px;
  gap: 14px;
  border-bottom: 2px solid var(--deep);
  background: var(--head);
  font-size: 21px;
}
.prop { position: relative; display: grid; grid-template-columns: 268px 1fr 75px; height: 54px; align-items: stretch; font-size: 21px; }
.prop label { display: flex; align-items: center; padding-left: 42px; }
.value { display: flex; align-items: center; padding-left: 25px; border-left: 2px solid var(--deep); border-right: 2px solid var(--deep); }
.value input {
  appearance: none;
  width: 34px;
  height: 36px;
  border: 2px solid var(--line);
  border-radius: 6px;
  background: var(--field);
}
.value input:checked::after {
  content: "";
  display: block;
  width: 21px;
  height: 11px;
  margin: 7px 0 0 4px;
  border: solid #0070e0;
  border-width: 0 0 4px 4px;
  transform: rotate(-45deg);
}
.reset { margin-left: 10px; width: 24px; }
.mark-prop { left: 26px; top: -2px; width: 352px; height: 58px; }

/* Status bar */
.status { display: flex; height: 48px; flex: none; gap: 4px; padding: 0 6px 0 2px; overflow: hidden; }
.st { display: flex; align-items: center; height: 64px; background: var(--panel); }
.drawer { width: 242px; padding-left: 20px; gap: 8px; }
.log { width: 188px; padding-left: 20px; gap: 8px; }
.console { width: 732px; padding: 10px 16px 0 28px; }
.cmd { gap: 8px; width: 157px; height: 44px; margin-top: -10px; }
.cmd .ic-chev { margin-left: 6px; }
.console input { flex: 1; height: 54px; padding: 0 16px 14px; border: 2px solid var(--line); border-radius: 8px; background: var(--field); font-size: 24px; }
.fill { flex: 1; }
.source { width: 376px; padding-left: 24px; }
.source button { gap: 11px; }
.source .vcs { margin-left: 15px; padding-left: 16px; border-left: 2px solid var(--deep); }
```
